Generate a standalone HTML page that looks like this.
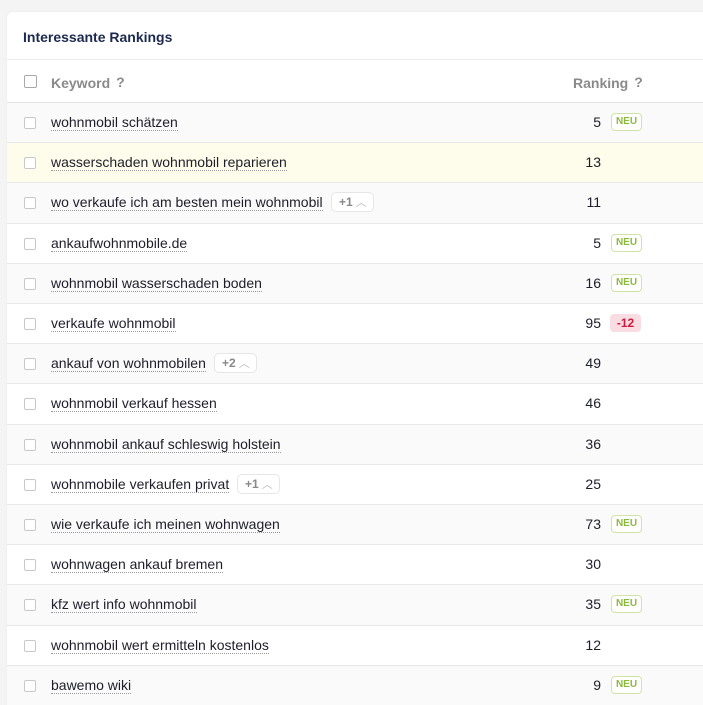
<!DOCTYPE html><html><head><style>
html,body{margin:0;background:#f4f4f4;font-family:"Liberation Sans",sans-serif;width:703px;height:705px;overflow:hidden;position:relative}
.card{position:absolute;left:7px;top:12px;width:720px;height:720px;background:#fff;border-radius:6px 0 0 0;box-shadow:0 0 2px rgba(0,0,0,.06)}
.title{position:absolute;left:16px;top:17px;font-size:14px;font-weight:bold;color:#1c2a4f}
.hdr{position:absolute;left:0;top:47px;width:100%;height:44px;border-top:1px solid #ececec;border-bottom:1px solid #e4e4e4;box-sizing:border-box}
.hdr span{position:absolute;top:14px;font-size:14px;font-weight:bold;color:#8a8a8a}
.q{font-size:9px;color:#c4c4c4;margin-left:6px;vertical-align:1px}
.cb{position:absolute;left:17px;width:10px;height:10px;border:1px solid #c8c8c8;border-radius:2px;background:#fff}
.row{position:absolute;left:0;width:100%;height:40.2px;border-bottom:1px solid #e8e8e8;box-sizing:border-box}
.row .cb{top:14px}
.kw{position:absolute;left:44px;top:11px;font-size:14px;color:#1e1e2a;border-bottom:1px dotted #9a9a9a;line-height:16px}
.num{position:absolute;right:126px;top:11px;font-size:14px;color:#1e1e2a;line-height:16px}
.neu{position:absolute;left:604px;top:10px;width:29px;height:16px;border:1px solid #cfe3a6;border-radius:4px;font-size:10px;font-weight:bold;color:#8bb93a;text-align:center;line-height:16px;background:#fff}
.neg{position:absolute;left:603px;top:10px;width:31px;height:18px;border-radius:4px;background:#fadde2;color:#d2183c;font-size:12px;font-weight:bold;text-align:center;line-height:18px}
.pl{display:inline-block;position:absolute;top:9px;height:18px;border:1px solid #e6e6e6;border-radius:5px;font-size:12px;font-weight:bold;color:#888;line-height:18px;padding:0 6px 0 7px;background:#fff}
.pl i{font-style:normal;color:#bbb;font-weight:normal;font-size:11px;margin-left:3px}
</style></head><body><div class="card">
<div class="title">Interessante Rankings</div>
<div class="hdr"><div class="cb" style="top:15px;width:11px;height:11px;border-color:#a9a9a9"></div><span style="left:44px">Keyword<span class="q" style="position:static">?</span></span><span style="left:566px">Ranking<span class="q" style="position:static">?</span></span></div>
<div class="row" style="top:91px;background:#fafafa"><div class="cb"></div><span class="kw">wohnmobil schätzen</span><span class="num">5</span><span class="neu">NEU</span></div>
<div class="row" style="top:131.2px;background:#fefdeb"><div class="cb"></div><span class="kw">wasserschaden wohnmobil reparieren</span><span class="num">13</span></div>
<div class="row" style="top:171.4px;background:#fafafa"><div class="cb"></div><span class="kw">wo verkaufe ich am besten mein wohnmobil</span><span class="pl" style="left:324px">+1<i>︿</i></span><span class="num">11</span></div>
<div class="row" style="top:211.6px"><div class="cb"></div><span class="kw">ankaufwohnmobile.de</span><span class="num">5</span><span class="neu">NEU</span></div>
<div class="row" style="top:251.8px;background:#fafafa"><div class="cb"></div><span class="kw">wohnmobil wasserschaden boden</span><span class="num">16</span><span class="neu">NEU</span></div>
<div class="row" style="top:292px"><div class="cb"></div><span class="kw">verkaufe wohnmobil</span><span class="num">95</span><span class="neg">-12</span></div>
<div class="row" style="top:332.2px;background:#fafafa"><div class="cb"></div><span class="kw">ankauf von wohnmobilen</span><span class="pl" style="left:207px">+2<i>︿</i></span><span class="num">49</span></div>
<div class="row" style="top:372.4px"><div class="cb"></div><span class="kw">wohnmobil verkauf hessen</span><span class="num">46</span></div>
<div class="row" style="top:412.6px;background:#fafafa"><div class="cb"></div><span class="kw">wohnmobil ankauf schleswig holstein</span><span class="num">36</span></div>
<div class="row" style="top:452.8px"><div class="cb"></div><span class="kw">wohnmobile verkaufen privat</span><span class="pl" style="left:230px">+1<i>︿</i></span><span class="num">25</span></div>
<div class="row" style="top:493px;background:#fafafa"><div class="cb"></div><span class="kw">wie verkaufe ich meinen wohnwagen</span><span class="num">73</span><span class="neu">NEU</span></div>
<div class="row" style="top:533.2px"><div class="cb"></div><span class="kw">wohnwagen ankauf bremen</span><span class="num">30</span></div>
<div class="row" style="top:573.4px;background:#fafafa"><div class="cb"></div><span class="kw">kfz wert info wohnmobil</span><span class="num">35</span><span class="neu">NEU</span></div>
<div class="row" style="top:613.6px"><div class="cb"></div><span class="kw">wohnmobil wert ermitteln kostenlos</span><span class="num">12</span></div>
<div class="row" style="top:653.8px;background:#fafafa"><div class="cb"></div><span class="kw">bawemo wiki</span><span class="num">9</span><span class="neu">NEU</span></div>
</div></body></html>
